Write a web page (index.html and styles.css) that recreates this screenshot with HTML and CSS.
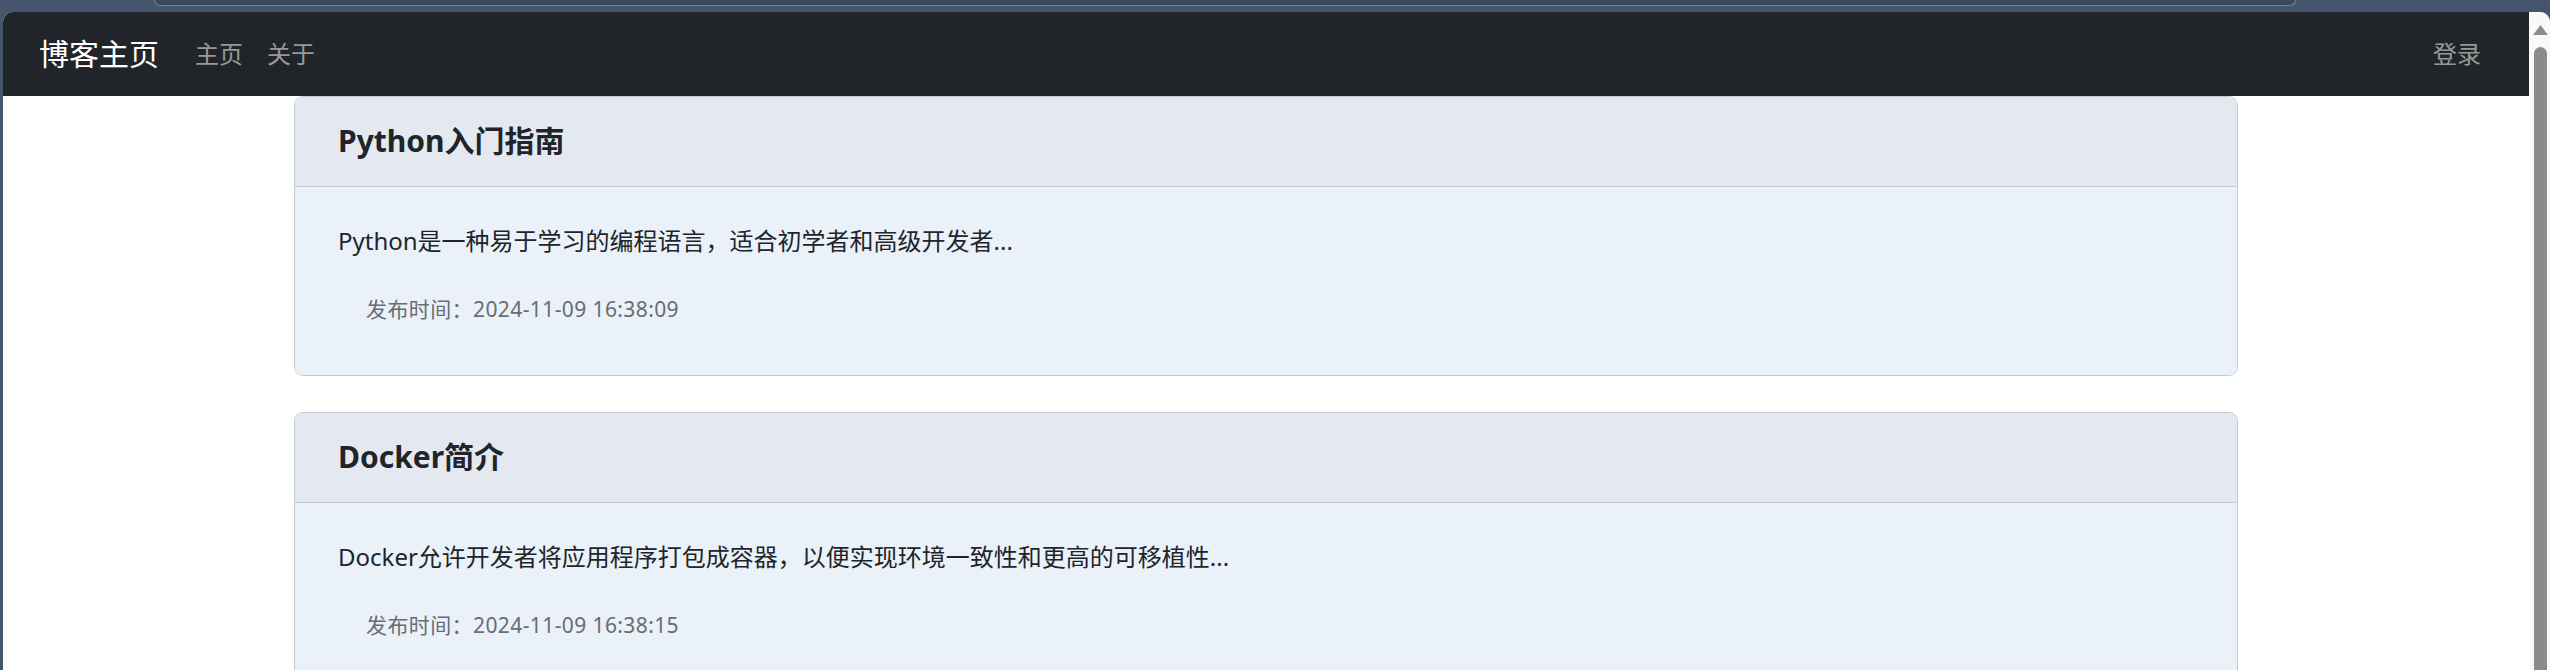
FILE: index.html
```html
<!DOCTYPE html>
<html lang="zh-CN">
<head>
<meta charset="utf-8">
<title>博客主页</title>
<link rel="stylesheet" href="styles.css">
</head>
<body>
  <div class="chrome">
    <div class="address"></div>
  </div>
  <div class="window">
    <div class="page">
      <nav class="navbar">
        <a class="brand" href="#">博客主页</a>
        <ul class="nav">
          <li><a class="nav-link" href="#">主页</a></li>
          <li><a class="nav-link" href="#">关于</a></li>
        </ul>
        <div class="nav-right">
          <a class="nav-link" href="#">登录</a>
        </div>
      </nav>
      <main class="container">
        <article class="card">
          <header class="card-header"><h5 class="card-title">Python入门指南</h5></header>
          <div class="card-body">
            <p class="card-text">Python是一种易于学习的编程语言，适合初学者和高级开发者...</p>
            <p class="meta">发布时间：2024-11-09 16:38:09</p>
          </div>
        </article>
        <article class="card">
          <header class="card-header"><h5 class="card-title">Docker简介</h5></header>
          <div class="card-body">
            <p class="card-text">Docker允许开发者将应用程序打包成容器，以便实现环境一致性和更高的可移植性...</p>
            <p class="meta">发布时间：2024-11-09 16:38:15</p>
          </div>
        </article>
      </main>
    </div>
    <div class="scrollbar">
      <svg class="arrow" width="15" height="10" viewBox="0 0 15 10"><path d="M7.5 0 L15 10 L0 10 Z" fill="#8d8d8d"/></svg>
      <div class="thumb"></div>
    </div>
  </div>
</body>
</html>
```
FILE: styles.css
```css
* { box-sizing: border-box; }
html, body { margin: 0; height: 670px; overflow: hidden; }
body {
  background: #45556e;
  display: flex;
  flex-direction: column;
  padding-left: 3px;
  font-family: "Noto Sans", "Noto Sans CJK SC", sans-serif;
  color: #212529;
}
.chrome {
  height: 12px;
  flex: none;
  display: flex;
}
.address {
  margin-left: 151px;
  width: 2142px;
  height: 6px;
  background: #3b485c;
  border: 1px solid #76839a;
  border-top: none;
  border-radius: 0 0 12px 12px;
}
.window {
  flex: 1;
  display: flex;
  min-height: 0;
  border-radius: 10px 10px 0 0;
  overflow: hidden;
  background: #ffffff;
}
.page {
  flex: 1;
  min-width: 0;
  overflow: hidden;
}
.navbar {
  height: 84px;
  background: #212529;
  display: flex;
  align-items: center;
  padding: 0 36px 0 36px;
}
.brand {
  font-size: 30px;
  line-height: 36px;
  color: #ffffff;
  text-decoration: none;
  margin-right: 24px;
}
.nav {
  list-style: none;
  margin: 0;
  padding: 0;
  display: flex;
}
.nav-link {
  display: block;
  padding: 0 12px;
  font-size: 24px;
  line-height: 36px;
  color: rgba(255, 255, 255, 0.55);
  text-decoration: none;
}
.nav-right { margin-left: auto; }
.container {
  width: 1944px;
  margin: 0 auto;
}
.card {
  border: 1px solid #c5c9d0;
  border-radius: 9px;
  overflow: hidden;
  margin-bottom: 36px;
}
.card-header {
  background: #e4e8f0;
  border-bottom: 1px solid #c5c9d0;
  padding: 26px 42px 27px 43px;
}
.card-title {
  margin: 0;
  font-size: 30px;
  line-height: 36px;
  font-weight: 700;
}
.card-body {
  background: #eaf1f9;
  padding: 36px 42px 50px 43px;
}
.card-text {
  margin: 0 0 35px;
  font-size: 24px;
  line-height: 36px;
}
.meta {
  margin: 0;
  padding-left: 28px;
  font-size: 21px;
  line-height: 31px;
  letter-spacing: 0.4px;
  color: #666d74;
}
.scrollbar {
  width: 21px;
  flex: none;
  background: #f9f9f9;
  display: flex;
  flex-direction: column;
  align-items: flex-start;
  padding: 13px 0 0 4px;
}
.arrow { display: block; }
.thumb {
  margin-top: 12px;
  margin-left: 1px;
  width: 13px;
  flex: 1;
  background: #8b8b8b;
  border-radius: 7px 7px 0 0;
}
```
